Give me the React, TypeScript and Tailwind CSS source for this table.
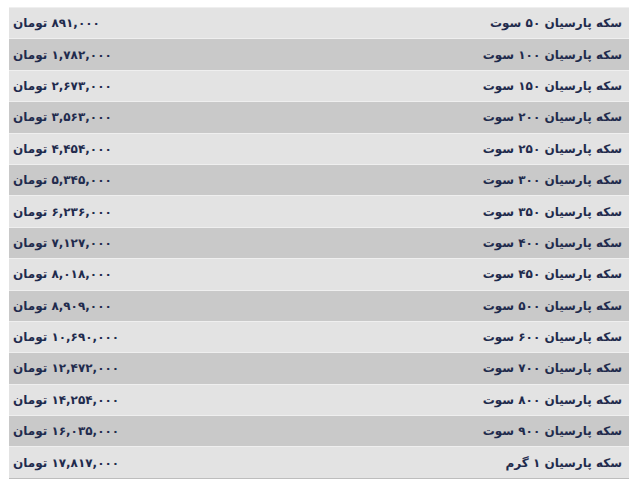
const rows: [string, string][] = [
  ['سکه پارسیان ۵۰ سوت', '۸۹۱,۰۰۰ تومان'],
  ['سکه پارسیان ۱۰۰ سوت', '۱,۷۸۲,۰۰۰ تومان'],
  ['سکه پارسیان ۱۵۰ سوت', '۲,۶۷۳,۰۰۰ تومان'],
  ['سکه پارسیان ۲۰۰ سوت', '۳,۵۶۳,۰۰۰ تومان'],
  ['سکه پارسیان ۲۵۰ سوت', '۴,۴۵۴,۰۰۰ تومان'],
  ['سکه پارسیان ۳۰۰ سوت', '۵,۳۴۵,۰۰۰ تومان'],
  ['سکه پارسیان ۳۵۰ سوت', '۶,۲۳۶,۰۰۰ تومان'],
  ['سکه پارسیان ۴۰۰ سوت', '۷,۱۲۷,۰۰۰ تومان'],
  ['سکه پارسیان ۴۵۰ سوت', '۸,۰۱۸,۰۰۰ تومان'],
  ['سکه پارسیان ۵۰۰ سوت', '۸,۹۰۹,۰۰۰ تومان'],
  ['سکه پارسیان ۶۰۰ سوت', '۱۰,۶۹۰,۰۰۰ تومان'],
  ['سکه پارسیان ۷۰۰ سوت', '۱۲,۴۷۲,۰۰۰ تومان'],
  ['سکه پارسیان ۸۰۰ سوت', '۱۴,۲۵۴,۰۰۰ تومان'],
  ['سکه پارسیان ۹۰۰ سوت', '۱۶,۰۳۵,۰۰۰ تومان'],
  ['سکه پارسیان ۱ گرم', '۱۷,۸۱۷,۰۰۰ تومان'],
];

export default function App() {
  return (
    <div className="w-[634px] h-[486px] bg-white pt-[7px] pl-[9px] pr-[5px]">
      <div dir="rtl" className="flex flex-col font-['DejaVu_Sans',sans-serif] font-bold text-[12px] text-[#1f2b4d] border-b border-[#bdbdbd]">
        {rows.map(([name, price], i) => (
          <div
            key={i}
            className={`flex items-center justify-between h-[31.4px] pr-[7px] pl-[4px] border-t border-[#efefef] ${
              i % 2 === 0 ? 'bg-[#e3e3e3]' : 'bg-[#c9c9c9]'
            }`}
          >
            <span>{name}</span>
            <span>{price}</span>
          </div>
        ))}
      </div>
    </div>
  );
}
